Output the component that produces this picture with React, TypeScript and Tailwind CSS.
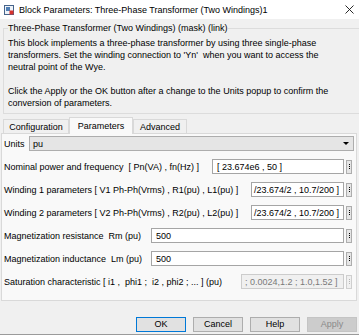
// Simulink block parameters dialog: Three-Phase Transformer (Two Windings)

function BlockIcon() {
  return (
    <svg width="10" height="10" viewBox="0 0 10 10" className="shrink-0">
      <rect x="0.5" y="0.5" width="9" height="9" fill="#eef3f9" stroke="#46648a" />
      <rect x="2" y="2" width="4" height="4" fill="#4f7fb5" />
      <rect x="5.5" y="5.5" width="4" height="4" fill="#d8322c" />
    </svg>
  );
}

function Dots({ disabled }: { disabled?: boolean }) {
  return (
    <div
      className={`w-[6px] h-[14px] border flex flex-col items-center justify-center gap-[1px] ${
        disabled ? "border-[#cfcfcf] bg-[#f0f0f0]" : "border-[#adadad] bg-[#e5e5e5]"
      }`}
    >
      <div className={`w-[1px] h-[1px] ${disabled ? "bg-[#b5b5b5]" : "bg-black"}`} />
      <div className={`w-[1px] h-[1px] ${disabled ? "bg-[#b5b5b5]" : "bg-black"}`} />
      <div className={`w-[1px] h-[1px] ${disabled ? "bg-[#b5b5b5]" : "bg-black"}`} />
    </div>
  );
}

interface ParamRowProps {
  label: string;
  value: string;
  width: string;
  disabled?: boolean;
  clipLeft?: boolean;
}

function ParamRow({ label, value, width, disabled, clipLeft }: ParamRowProps) {
  return (
    <div className="flex items-center justify-between h-[15px] pl-[2px] pr-[4px]">
      <span className="whitespace-pre">{label}</span>
      <div className="flex items-center gap-[2px]">
        <div
          className={`${width} h-[15px] border flex items-center overflow-hidden whitespace-pre ${
            disabled
              ? "border-[#cccccc] bg-[#f0f0f0] text-[#7a7a7a] pl-[3px]"
              : "border-[#a5a5a5] bg-white pl-[4px]"
          }`}
        >
          <span className={clipLeft ? "-ml-[2px]" : ""}>{value}</span>
        </div>
        <Dots disabled={disabled} />
      </div>
    </div>
  );
}

export default function App() {
  return (
    <div className="w-[359px] h-[335px] overflow-hidden bg-[#f0f0f0] font-['Liberation_Sans',Arial,sans-serif] text-[9px] leading-[12px] text-black">
      {/* title bar */}
      <div className="h-[19px] bg-white flex items-center pl-[4px] pr-[5px]">
        <BlockIcon />
        <span className="ml-[5px] flex-1 whitespace-nowrap">
          Block Parameters: Three-Phase Transformer (Two Windings)1
        </span>
        <svg width="9" height="9" viewBox="0 0 9 9" className="shrink-0">
          <path d="M0.5 0.5 L8.5 8.5 M8.5 0.5 L0.5 8.5" stroke="#111" strokeWidth="0.9" />
        </svg>
      </div>

      {/* mask description */}
      <fieldset className="mt-[3px] ml-[3px] w-[360px] border border-[#dcdcdc] px-[4px] pb-[4px]">
        <legend className="whitespace-nowrap">
          Three-Phase Transformer (Two Windings) (mask) (link)
        </legend>
        <div className="pt-[3px] whitespace-pre">
          <p>
            This block implements a three-phase transformer by using three single-phase
            <br />
            transformers. Set the winding connection to 'Yn'  when you want to access the
            <br />
            neutral point of the Wye.
          </p>
          <p className="mt-[12px]">
            Click the Apply or the OK button after a change to the Units popup to confirm the
            <br />
            conversion of parameters.
          </p>
        </div>
      </fieldset>

      {/* tabs */}
      <div className="mt-[3px] ml-[1px] w-[356px] h-[17px] flex items-end">
        <div className="w-[2px] h-[15px] border-b border-[#d9d9d9]" />
        <div className="w-[66px] h-[15px] border border-[#d9d9d9] flex items-center justify-center">
          Configuration
        </div>
        <div className="w-[64px] h-[17px] border border-b-0 border-[#d9d9d9] bg-[#f9f9f9] flex items-center justify-center">
          Parameters
        </div>
        <div className="w-[54px] h-[15px] border border-[#d9d9d9] flex items-center justify-center">
          Advanced
        </div>
        <div className="flex-1 h-[15px] border-b border-[#d9d9d9]" />
      </div>

      {/* tab panel */}
      <div className="ml-[1px] w-[356px] h-[167px] border-x border-b border-[#d9d9d9] bg-[#f9f9f9] pt-[2px] flex flex-col gap-[8px]">
        <div className="flex items-center justify-between h-[15px] pl-[2px] pr-[2px]">
          <span>Units</span>
          <div className="w-[325px] h-[15px] border border-[#adadad] bg-[#e5e5e5] flex items-center justify-between pl-[3px] pr-[4px]">
            <span>pu</span>
            <div className="w-0 h-0 border-l-[3px] border-r-[3px] border-t-[3px] border-l-transparent border-r-transparent border-t-black" />
          </div>
        </div>
        <ParamRow
          label="Nominal power and frequency  [ Pn(VA) , fn(Hz) ]"
          value="[ 23.674e6 , 50 ]"
          width="w-[132px]"
        />
        <ParamRow
          label="Winding 1 parameters [ V1 Ph-Ph(Vrms) , R1(pu) , L1(pu) ]"
          value="/23.674/2 , 10.7/200 ]"
          width="w-[93px]"
          clipLeft
        />
        <ParamRow
          label="Winding 2 parameters [ V2 Ph-Ph(Vrms) , R2(pu) , L2(pu) ]"
          value="/23.674/2 , 10.7/200 ]"
          width="w-[93px]"
          clipLeft
        />
        <ParamRow label="Magnetization resistance  Rm (pu)" value="500" width="w-[193px]" />
        <ParamRow label="Magnetization inductance  Lm (pu)" value="500" width="w-[193px]" />
        <ParamRow
          label="Saturation characteristic [ i1 ,  phi1 ;  i2 , phi2 ; ... ] (pu)"
          value="; 0.0024,1.2 ; 1.0,1.52 ]"
          width="w-[103px]"
          disabled
        />
      </div>

      {/* buttons */}
      <div className="mt-[16px] flex justify-end gap-[7px] pr-[2px]">
        <button className="w-[50px] h-[15px] border border-[#0078d7] bg-[#e1e1e1] leading-[13px]">OK</button>
        <button className="w-[50px] h-[15px] border border-[#adadad] bg-[#e1e1e1] leading-[13px]">Cancel</button>
        <button className="w-[50px] h-[15px] border border-[#adadad] bg-[#e1e1e1] leading-[13px]">Help</button>
        <button className="w-[50px] h-[15px] border border-[#c4c4c4] bg-[#cccccc] text-[#8a8a8a] leading-[13px]">
          Apply
        </button>
      </div>
      <div className="mt-[2px] h-[1px] bg-[#9a9a9a]" />
    </div>
  );
}
